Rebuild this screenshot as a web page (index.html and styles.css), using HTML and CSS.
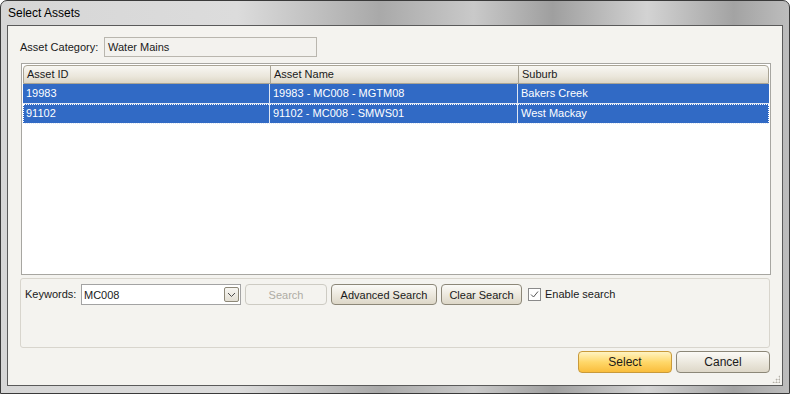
FILE: index.html
```html
<!DOCTYPE html>
<html lang="en">
<head>
    <meta charset="UTF-8">
    <title>Select Assets</title>
    <link rel="stylesheet" href="styles.css">
</head>
<body>
    <div class="window">
        <div class="titlebar">Select Assets</div>
        <div class="client">
            <div class="category-row">
                <label>Asset Category:</label>
                <div class="readonly-box">Water Mains</div>
            </div>

            <div class="grid">
                <div class="grid-header">
                    <div class="col c1">Asset ID</div>
                    <div class="col c2">Asset Name</div>
                    <div class="col c3">Suburb</div>
                </div>
                <div class="grid-row selected">
                    <div class="col c1">19983</div>
                    <div class="col c2">19983 - MC008 - MGTM08</div>
                    <div class="col c3">Bakers Creek</div>
                </div>
                <div class="grid-row selected focused">
                    <div class="col c1">91102</div>
                    <div class="col c2">91102 - MC008 - SMWS01</div>
                    <div class="col c3">West Mackay</div>
                </div>
            </div>

            <div class="search-panel">
                <label>Keywords:</label>
                <div class="combo">
                    <span class="combo-text">MC008</span>
                    <span class="combo-btn">
                        <svg width="9" height="6" viewBox="0 0 9 6"><path d="M1 1 L4.5 4.5 L8 1" fill="none" stroke="#4d4d4d" stroke-width="1"/></svg>
                    </span>
                </div>
                <button class="btn btn-search" disabled>Search</button>
                <button class="btn btn-adv">Advanced Search</button>
                <button class="btn btn-clear">Clear Search</button>
                <span class="check">
                    <svg width="9" height="9" viewBox="0 0 9 9"><path d="M1 4.5 L3.5 7 L8 1.5" fill="none" stroke="#555" stroke-width="1"/></svg>
                </span>
                <span class="check-label">Enable search</span>
            </div>

            <div class="actions">
                <button class="btn btn-select">Select</button>
                <button class="btn btn-cancel">Cancel</button>
            </div>
            <div class="grip"></div>
        </div>
    </div>
</body>
</html>
```

FILE: styles.css
```css
body {
    margin: 0;
    width: 790px;
    height: 394px;
    overflow: hidden;
    font-family: "Liberation Sans", Arial, sans-serif;
    font-size: 11px;
    color: #1a1a1a;
    background: #ffffff;
}
.window {
    width: 790px;
    height: 394px;
    box-sizing: border-box;
    border: 1px solid #3a3a3a;
    border-radius: 7px 7px 0 0;
    background: linear-gradient(90deg, #d6d6d6 0%, #dcdcdc 30%, #a9a9a9 48%, #c9c9c9 60%, #9f9f9f 70%, #d3d3d3 82%, #a3a3a3 93%, #bdbdbd 100%);
    display: flex;
    flex-direction: column;
}
.titlebar {
    height: 24px;
    padding-left: 7px;
    line-height: 24px;
    font-size: 12px;
    color: #000;
}
.client {
    position: relative;
    margin: 0 6px 0 6px;
    height: 361px;
    box-sizing: border-box;
    border: 1px solid #5a5a5a;
    background: #f4f3ef;
    display: flex;
    flex-direction: column;
    padding: 11px 12px 0 12px;
}
.category-row {
    display: flex;
    align-items: center;
    height: 20px;
}
.category-row label {
    width: 84px;
}
.readonly-box {
    width: 208px;
    height: 18px;
    border: 1px solid #b9b6ae;
    background: #f3f2ee;
    line-height: 18px;
    padding-left: 3px;
}
.grid {
    margin-top: 6px;
    margin-left: 1px;
    margin-right: -1px;
    height: 212px;
    box-sizing: border-box;
    border: 1px solid #a7a6a1;
    background: #fff;
    padding: 1px;
}
.grid-header {
    display: flex;
    height: 19px;
    border: 1px solid #a9a495;
    border-radius: 4px 4px 0 0;
    background: linear-gradient(#f8f7f3, #ebe7dc 60%, #ddd6c6);
    box-sizing: border-box;
}
.grid-header .col {
    border-right: 1px solid #a9a495;
    line-height: 17px;
}
.grid-header .c3 { border-right: none; }
.col {
    padding-left: 3px;
    box-sizing: border-box;
}
.c1 { width: 247px; }
.c2 { width: 248px; }
.c3 { flex: 1; }
.grid-row {
    display: flex;
    height: 20px;
    line-height: 19px;
}
.grid-row.selected {
    background: #316ac5;
    color: #fff;
}
.grid-row .col {
    border-right: 1px solid #dfe6f2;
    border-bottom: 1px solid #dfe6f2;
}
.grid-row .c3 { border-right: none; }
.grid-row.focused {
    outline: 1px dotted #ffffff;
    outline-offset: -1px;
}
.search-panel {
    margin-top: 3px;
    height: 70px;
    box-sizing: border-box;
    border: 1px solid #d8d5cd;
    border-radius: 3px;
    display: flex;
    align-items: flex-start;
    padding: 5px 0 0 4px;
}
.search-panel label {
    line-height: 21px;
    width: 56px;
}
.combo {
    width: 160px;
    height: 21px;
    box-sizing: border-box;
    border: 1px solid #a3a3a3;
    background: #fff;
    display: flex;
    align-items: center;
    justify-content: space-between;
    padding: 0 1px 0 2px;
}
.combo-btn {
    width: 15px;
    height: 15px;
    box-sizing: border-box;
    border: 1px solid #8d8878;
    border-radius: 2px;
    background: linear-gradient(#f7f6f2, #e3dfd4);
    display: flex;
    align-items: center;
    justify-content: center;
}
.btn {
    font-family: inherit;
    font-size: 11px;
    height: 21px;
    box-sizing: border-box;
    border: 1px solid #8c8778;
    border-radius: 4px;
    background: linear-gradient(#fbfaf7, #ebe7dc 55%, #ddd7c8);
    color: #1a1a1a;
    padding: 0;
    margin-left: 4px;
}
.btn-search {
    width: 82px;
    color: #aeaca4;
    border-color: #cdcbc3;
    background: #f4f3ef;
}
.btn-adv { width: 106px; }
.btn-clear { width: 81px; }
.check {
    width: 13px;
    height: 13px;
    box-sizing: border-box;
    border: 1px solid #8a8a8a;
    background: #fff;
    margin: 4px 0 0 6px;
    display: flex;
    align-items: center;
    justify-content: center;
}
.check-label {
    line-height: 21px;
    margin-left: 4px;
}
.actions {
    display: flex;
    justify-content: flex-end;
    margin-top: 3px;
}
.btn-select,
.btn-cancel {
    width: 94px;
    height: 22px;
    font-size: 12px;
}
.btn-select {
    border-color: #c99a3a;
    background: linear-gradient(#fff3c2, #ffd86a 50%, #f9bd3c);
}
.btn-cancel { margin-left: 4px; }
.grip {
    position: absolute;
    right: 2px;
    bottom: 2px;
    width: 8px;
    height: 8px;
    background: radial-gradient(circle, #b3b0a8 0.8px, transparent 1.2px) 0 0 / 3px 3px;
    clip-path: polygon(100% 0, 100% 100%, 0 100%);
}
```
